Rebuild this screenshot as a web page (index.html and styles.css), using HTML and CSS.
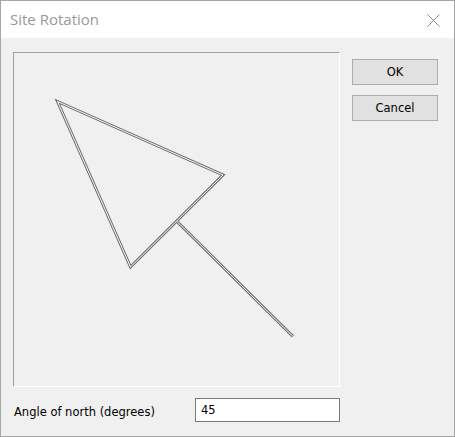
FILE: index.html
```html
<!DOCTYPE html>
<html>
<head>
<meta charset="utf-8">
<link rel="stylesheet" href="styles.css">
</head>
<body>
<div class="window">
  <div class="titlebar">
    <span class="title">Site Rotation</span>
    <svg class="close" width="13" height="13" viewBox="0 0 13 13"><path d="M0.5 0.5 L12.5 12.5 M12.5 0.5 L0.5 12.5" stroke="#8a8a8a" stroke-width="1" fill="none"/></svg>
  </div>
  <div class="content">
    <div class="main">
      <div class="panel">
        <svg class="arrow" width="325" height="333" viewBox="14 53 325 333">
          <path d="M57.5 101.5 L223 175 L130.5 267 Z M177 221.5 L293 336.5" fill="none" stroke="#6e6e6e" stroke-width="3" stroke-linejoin="miter"/>
          <path d="M57.5 101.5 L223 175 L130.5 267 Z M177 221.5 L293 336.5" fill="none" stroke="#fbfbfb" stroke-width="1" stroke-linejoin="miter"/>
        </svg>
      </div>
      <div class="buttons">
        <button class="btn">OK</button>
        <button class="btn">Cancel</button>
      </div>
    </div>
    <div class="footer">
      <span class="label">Angle of north (degrees)</span>
      <div class="input">45</div>
    </div>
  </div>
</div>
</body>
</html>
```
FILE: styles.css
```css
html, body {
  margin: 0;
  padding: 0;
  background: #f0f0f0;
}
.window {
  width: 455px;
  height: 437px;
  box-sizing: border-box;
  border: 1px solid #a5a5a5;
  background: #f0f0f0;
  display: flex;
  flex-direction: column;
}
.titlebar {
  height: 37px;
  background: #ffffff;
  display: flex;
  align-items: center;
  justify-content: space-between;
  padding: 0 14px 0 9px;
  flex-shrink: 0;
}
.title {
  font-family: "Open Sans", "Noto Sans", sans-serif;
  font-size: 15px;
  color: #999999;
  margin-top: -1px;
}
.close {
  display: block;
  margin-top: 1px;
}
.content {
  padding: 14px 0 0 12px;
  font-family: "DejaVu Sans", sans-serif;
  font-size: 11.5px;
  color: #000;
}
.main {
  display: flex;
  align-items: flex-start;
}
.panel {
  width: 327px;
  height: 335px;
  box-sizing: border-box;
  border-top: 1px solid #a0a0a0;
  border-left: 1px solid #a0a0a0;
  border-right: 1px solid #ffffff;
  border-bottom: 1px solid #ffffff;
  background: #f0f0f0;
}
.arrow {
  display: block;
}
.buttons {
  display: flex;
  flex-direction: column;
  gap: 10px;
  margin-left: 12px;
  margin-top: 7px;
}
.btn {
  width: 86px;
  height: 26px;
  box-sizing: border-box;
  border: 1px solid #adadad;
  background: #e1e1e1;
  font-family: "DejaVu Sans", sans-serif;
  font-size: 11.5px;
  color: #000;
  padding: 0;
  margin: 0;
}
.footer {
  display: flex;
  align-items: center;
  margin-top: 11px;
}
.label {
  width: 181px;
  padding-left: 1px;
  margin-top: 3px;
}
.input {
  width: 145px;
  height: 24px;
  box-sizing: border-box;
  border: 1px solid #7a7a7a;
  background: #ffffff;
  padding: 2px 0 0 5px;
  line-height: 18px;
}
```
